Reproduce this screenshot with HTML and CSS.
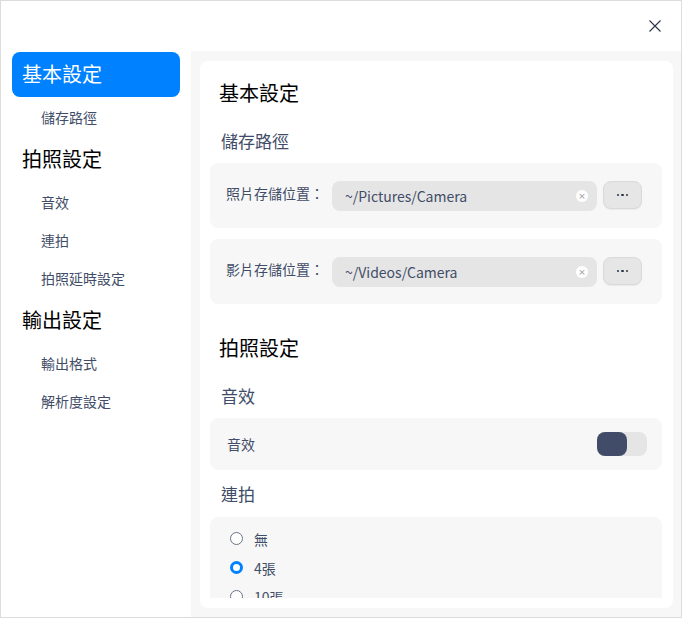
FILE: index.html
```html
<!DOCTYPE html>
<html lang="zh-Hant">
<head>
<meta charset="utf-8">
<title>設定</title>
<link rel="stylesheet" href="styles.css">
</head>
<body>
<div class="window">
  <div class="titlebar">
    <button class="close" aria-label="關閉">
      <svg width="12" height="12" viewBox="0 0 12 12"><path d="M0.5 0.5 L11.5 11.5 M11.5 0.5 L0.5 11.5" stroke="#2b3447" stroke-width="1.1" fill="none"/></svg>
    </button>
  </div>
  <div class="main">
    <nav class="sidebar">
      <div class="nav-head active">基本設定</div>
      <div class="nav-sub">儲存路徑</div>
      <div class="nav-head">拍照設定</div>
      <div class="nav-sub">音效</div>
      <div class="nav-sub">連拍</div>
      <div class="nav-sub">拍照延時設定</div>
      <div class="nav-head">輸出設定</div>
      <div class="nav-sub">輸出格式</div>
      <div class="nav-sub">解析度設定</div>
    </nav>
    <div class="panel">
      <div class="card">
        <div class="scroll">
          <div class="sec-title">基本設定</div>
          <div class="sub-title">儲存路徑</div>
          <div class="row path-row">
            <span class="label">照片存儲位置：</span>
            <div class="input"><span class="input-text">~/Pictures/Camera</span><span class="clear">×</span></div>
            <button class="more"><i></i><i></i><i></i></button>
          </div>
          <div class="row path-row gap-top">
            <span class="label">影片存儲位置：</span>
            <div class="input"><span class="input-text">~/Videos/Camera</span><span class="clear">×</span></div>
            <button class="more"><i></i><i></i><i></i></button>
          </div>
          <div class="sec-title sec-gap">拍照設定</div>
          <div class="sub-title">音效</div>
          <div class="row switch-row">
            <span class="label">音效</span>
            <div class="switch"><div class="knob"></div></div>
          </div>
          <div class="sub-title">連拍</div>
          <div class="radio-box">
            <div class="radio-item"><span class="radio"></span><span>無</span></div>
            <div class="radio-item"><span class="radio checked"></span><span>4張</span></div>
            <div class="radio-item"><span class="radio"></span><span>10張</span></div>
          </div>
        </div>
      </div>
    </div>
  </div>
</div>
</body>
</html>
```
FILE: styles.css
```css
* { box-sizing: border-box; }
html, body { margin: 0; padding: 0; background: #fff; }
body {
  font-family: "Noto Sans CJK TC", "Noto Sans", sans-serif;
  color: #414d68;
}
.window {
  width: 682px;
  height: 618px;
  border: 1px solid #dcdcdc;
  display: flex;
  flex-direction: column;
  background: #fff;
  overflow: hidden;
}
.titlebar {
  height: 50px;
  flex: none;
  display: flex;
  justify-content: flex-end;
}
.close {
  width: 48px;
  height: 50px;
  border: none;
  background: transparent;
  padding: 0;
  margin-right: 2px;
  display: flex;
  align-items: center;
  justify-content: center;
}
.close svg { display: block; }
.main {
  flex: 1;
  display: flex;
  min-height: 0;
}
.sidebar {
  width: 190px;
  flex: none;
  padding: 1px 11px 0 11px;
  background: #fff;
}
.nav-head {
  height: 45px;
  margin-bottom: 2px;
  line-height: 44px;
  padding-left: 10px;
  font-size: 20px;
  color: #000;
  border-radius: 8px;
}
.nav-head.active {
  background: #0081ff;
  color: #fff;
}
.nav-sub {
  height: 38px;
  line-height: 37px;
  padding-left: 29px;
  font-size: 14px;
  color: #414d68;
}
.panel {
  flex: 1;
  background: #f7f7f7;
  padding: 10px 8px 9px 9px;
  display: flex;
  min-width: 0;
}
.card {
  flex: 1;
  background: #fff;
  border-radius: 8px;
  padding: 0 11px 10px 10px;
  display: flex;
  flex-direction: column;
  min-height: 0;
}
.scroll {
  flex: 1;
  overflow: hidden;
  padding-top: 10px;
}
.sec-title {
  height: 46px;
  line-height: 44px;
  padding-left: 9px;
  font-size: 20px;
  color: #000;
}
.sec-gap { margin-top: 22px; }
.sub-title {
  height: 46px;
  line-height: 47px;
  padding-left: 11px;
  font-size: 17px;
  color: #414d68;
}
.row {
  background: #f7f7f7;
  border-radius: 8px;
  display: flex;
  align-items: center;
}
.path-row {
  height: 65px;
  padding: 0 20px 0 16px;
  gap: 6px;
}
.gap-top { margin-top: 11px; }
.label {
  font-size: 14px;
  color: #414d68;
  white-space: nowrap;
}
.path-row .label {
  width: 100px;
  margin-top: -5px;
}
.input {
  flex: 1;
  height: 30px;
  background: #e5e5e5;
  border-radius: 8px;
  display: flex;
  align-items: center;
  padding: 0 9px 0 13px;
}
.input-text {
  flex: 1;
  font-size: 14px;
  color: #414d68;
}
.clear {
  width: 12px;
  height: 12px;
  border-radius: 50%;
  background: #fff;
  color: #9a9a9a;
  font-size: 9px;
  line-height: 12px;
  text-align: center;
  font-family: "DejaVu Sans", sans-serif;
}
.more {
  width: 39px;
  height: 28px;
  border-radius: 8px;
  border: 1px solid #dadada;
  background: #e6e6e6;
  box-shadow: 0 1px 1px rgba(0,0,0,0.06);
  display: flex;
  align-items: center;
  justify-content: center;
  gap: 2px;
  padding: 0;
  margin-top: -1px;
}
.more i {
  width: 2.5px;
  height: 2.5px;
  border-radius: 50%;
  background: #2b3447;
  display: block;
}
.switch-row {
  height: 52px;
  padding: 0 15px 0 17px;
  justify-content: space-between;
}
.switch {
  width: 50px;
  height: 24px;
  border-radius: 8px;
  background: #e5e5e5;
}
.knob {
  width: 30px;
  height: 24px;
  border-radius: 8px;
  background: #414d68;
}
.radio-box {
  margin-top: 1px;
  background: #f7f7f7;
  border-radius: 8px 8px 0 0;
  padding: 7px 0 0 20px;
  height: 120px;
}
.radio-item {
  height: 29px;
  display: flex;
  align-items: center;
  gap: 11px;
  font-size: 14px;
  color: #414d68;
}
.radio {
  width: 13px;
  height: 13px;
  border-radius: 50%;
  border: 1px solid #6b7385;
  background: #fff;
  flex: none;
}
.radio.checked {
  border: 3.5px solid #0081ff;
}
```
